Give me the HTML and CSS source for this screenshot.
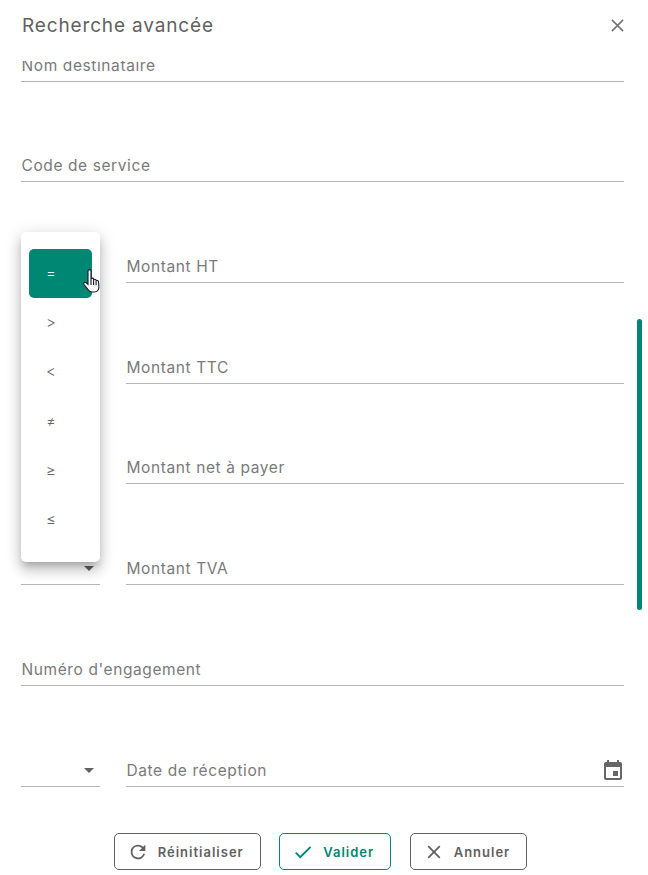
FILE: index.html
```html
<!DOCTYPE html>
<html lang="fr">
<head>
    <meta charset="UTF-8">
    <title>Recherche avancée</title>
    <link rel="stylesheet" href="styles.css">
</head>
<body>
<div class="dialog">
    <div class="dialog-header">
        <h1>Recherche avancée</h1>
        <svg class="close" viewBox="0 0 14 14"><path d="M1 1l12 12M13 1L1 13"/></svg>
    </div>
    <div class="dialog-content">
        <div class="fields">
            <div class="row"><div class="field">Nom destinataire</div></div>
            <div class="row"><div class="field">Code de service</div></div>
            <div class="row"><div class="select"><span class="caret"></span></div><div class="field">Montant HT</div></div>
            <div class="row"><div class="select"><span class="caret"></span></div><div class="field">Montant TTC</div></div>
            <div class="row"><div class="select"><span class="caret"></span></div><div class="field">Montant net à payer</div></div>
            <div class="row"><div class="select"><span class="caret"></span></div><div class="field">Montant TVA</div></div>
            <div class="row"><div class="field">Numéro d'engagement</div></div>
            <div class="row">
                <div class="select"><span class="caret"></span></div>
                <div class="field">Date de réception
                    <svg class="calendar" viewBox="0 0 24 24"><path d="M19 4h-1V2h-2v2H8V2H6v2H5c-1.1 0-2 .9-2 2v14c0 1.1.9 2 2 2h14c1.1 0 2-.9 2-2V6c0-1.1-.9-2-2-2zm0 16H5V9h14v11zm-7-7h5v5h-5z"/></svg>
                </div>
            </div>
        </div>
        <div class="scrollbar"></div>
    </div>
    <div class="dialog-footer">
        <button class="btn">
            <svg viewBox="0 0 24 24"><path d="M17.65 6.35A7.96 7.96 0 0 0 12 4a8 8 0 1 0 7.73 10h-2.08A6 6 0 1 1 12 6c1.66 0 3.14.69 4.22 1.78L13 11h7V4l-2.35 2.35z"/></svg>
            Réinitialiser
        </button>
        <button class="btn btn-primary">
            <svg viewBox="0 0 24 24"><path d="M9 16.2 4.8 12l-1.4 1.4L9 19 21 7l-1.4-1.4z"/></svg>
            Valider
        </button>
        <button class="btn">
            <svg viewBox="0 0 24 24"><path d="M19 6.4 17.6 5 12 10.6 6.4 5 5 6.4 10.6 12 5 17.6 6.4 19 12 13.4 17.6 19 19 17.6 13.4 12z"/></svg>
            Annuler
        </button>
    </div>

    <div class="menu">
        <div class="menu-item active">=</div>
        <div class="menu-item">&gt;</div>
        <div class="menu-item">&lt;</div>
        <div class="menu-item">≠</div>
        <div class="menu-item">≥</div>
        <div class="menu-item">≤</div>
    </div>
    <svg class="cursor" viewBox="0 0 18 24"><path d="M5 2c0-1.800 3-1.800 3 0v8c0-1.200 2.600-1.200 2.600 0v1c0-1.100 2.500-1.100 2.500.2v1c0-1 2.400-1 2.400.3l.4 5.500c.1 2.700-1.600 5-4.500 5H9c-2 0-3-1-4-2.400L1 15.500c-.9-1.500.9-3 2.200-1.800L5 15.500z"/><path class="cursor-lines" d="M8 10v6M10.600 11v5M13.100 12.200v4"/></svg>
</div>
</body>
</html>
```

FILE: styles.css
```css
* {
    box-sizing: border-box;
}
body {
    margin: 0;
    font-family: Inter, "Noto Sans", sans-serif;
    color: #666;
    background: #fff;
}
.dialog {
    position: relative;
    display: flex;
    flex-direction: column;
    height: 875px;
    overflow: hidden;
}
.dialog-header {
    display: flex;
    justify-content: space-between;
    align-items: center;
    height: 61px;
    padding: 0 24px 11px 22px;
    flex: none;
}
h1 {
    margin: 0;
    font-size: 19px;
    font-weight: 400;
    letter-spacing: 0.85px;
    color: #616161;
}
.close {
    width: 13px;
    height: 13px;
    fill: none;
    stroke: #757575;
    stroke-width: 1.7;
}
.dialog-content {
    position: relative;
    height: 740px;
    flex: none;
    overflow: hidden;
}
.fields {
    margin-top: -80px;
    padding: 0 24px 0 21px;
}
.row {
    display: flex;
    align-items: flex-end;
    gap: 26px;
    height: 100.7px;
}
.field {
    flex: 1;
    display: flex;
    justify-content: space-between;
    align-items: center;
    height: 32px;
    padding-left: 0.5px;
    border-bottom: 1px solid #b5b5b5;
    font-size: 15.5px;
    letter-spacing: 0.6px;
    color: #7a7a7a;
}
.select {
    display: flex;
    justify-content: flex-end;
    align-items: center;
    width: 79px;
    height: 32px;
    padding-right: 6px;
    border-bottom: 1px solid #b5b5b5;
}
.caret {
    border-left: 5.5px solid transparent;
    border-right: 5.5px solid transparent;
    border-top: 5px solid #616161;
}
.calendar {
    width: 24px;
    height: 24px;
    margin: -4px -1px -4px 0;
    fill: #666;
}
.scrollbar {
    position: absolute;
    top: 258px;
    right: 6px;
    width: 5px;
    height: 291px;
    border-radius: 3px;
    background: #008774;
}
.dialog-footer {
    display: flex;
    justify-content: center;
    gap: 18.5px;
    padding-top: 32px;
    padding-right: 7px;
}
.btn {
    display: flex;
    align-items: center;
    justify-content: center;
    gap: 9px;
    height: 37px;
    padding: 0 16px 0 12px;
    border: 1px solid #616161;
    border-radius: 5px;
    background: #fff;
    color: #616161;
    font-family: inherit;
    font-size: 13px;
    font-weight: 600;
    letter-spacing: 1px;
}
.btn svg {
    width: 22px;
    height: 22px;
    fill: #616161;
}
.btn-primary {
    border-color: #008774;
    color: #008774;
}
.btn-primary svg {
    fill: #008774;
}
.menu {
    position: absolute;
    top: 232px;
    left: 21px;
    width: 79px;
    height: 330px;
    padding: 17px 8px;
    border-radius: 5px;
    background: #fff;
    box-shadow: 0 5px 6px -3px rgba(0,0,0,0.2), 0 9px 12px 1px rgba(0,0,0,0.14), 0 3px 16px 2px rgba(0,0,0,0.12);
}
.menu-item {
    display: flex;
    align-items: center;
    height: 49.4px;
    padding: 0 0 2px 17px;
    border-radius: 5px;
    font-size: 15px;
    font-weight: 300;
    color: #666;
}
.menu-item.active {
    background: #008774;
    color: #fff;
}
.cursor {
    position: absolute;
    top: 269px;
    left: 83px;
    width: 18px;
    height: 24px;
    fill: #fff;
    stroke: #14142b;
    stroke-width: 1.1;
}
.cursor-lines {
    fill: none;
}
```
